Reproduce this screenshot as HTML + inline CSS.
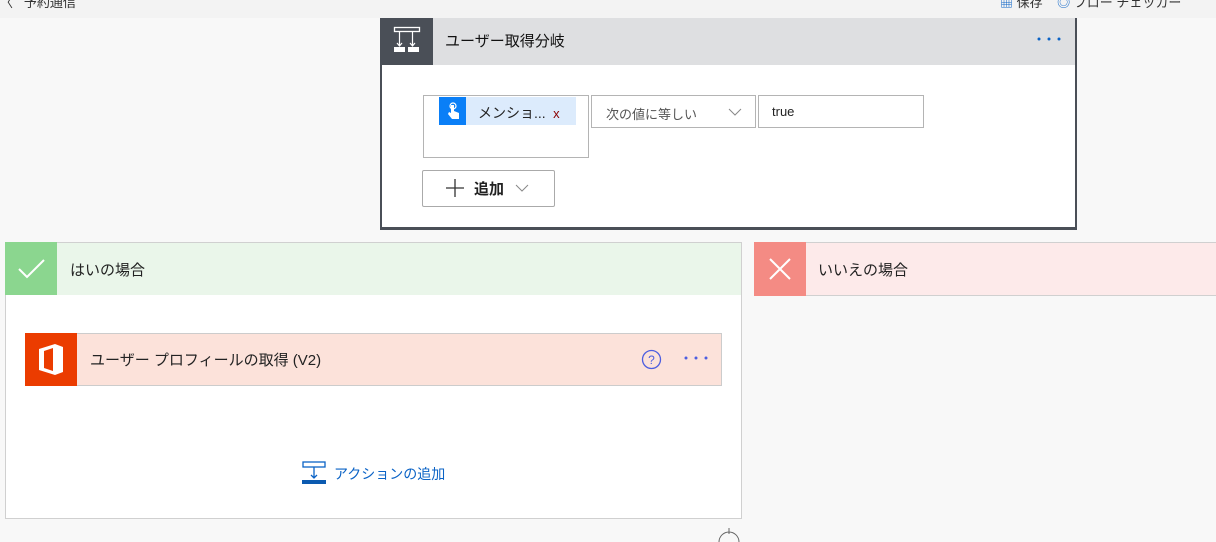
<!DOCTYPE html><html><head><meta charset="utf-8"><style>
body{margin:0;width:1216px;height:540px;background:#f8f8f8;font-family:"Liberation Sans","Noto Sans CJK JP",sans-serif;position:relative;overflow:hidden}
.a{position:absolute;box-sizing:border-box}
</style></head><body>
<div class="a" style="left:0;top:0;width:1216px;height:18px;background:#f3f3f3"></div>
<div class="a" style="left:0;top:-8px;font-size:13px;color:#333">〈 &nbsp; 予約通信</div>
<div class="a" style="left:1000px;top:-8px;font-size:13px;color:#333"><span style="color:#0b63c6">▦</span> 保存 &nbsp;&nbsp; <span style="color:#0b63c6">◎</span> フロー チェッカー</div>

<div class="a" style="left:380px;top:18px;width:697px;height:212px;background:#fff;border:2px solid #4a4f57;border-top:none;border-bottom-width:3px"></div>
<div class="a" style="left:380px;top:18px;width:697px;height:47px;background:#dedfe1;border-left:2px solid #4a4f57;border-right:2px solid #4a4f57"></div>
<div class="a" style="left:380px;top:18px;width:53px;height:47px;background:#4a4f57">
<svg width="53" height="47" viewBox="0 0 53 47"><rect x="14.5" y="9.5" width="25" height="4" fill="none" stroke="#fff" stroke-width="1.3"/><path d="M19.5 14v13M32.5 14v13M17 25l2.5 3 2.5-3M30 25l2.5 3 2.5-3" stroke="#fff" fill="none" stroke-width="1.2"/><rect x="14" y="29" width="11" height="5" fill="#fff"/><rect x="28" y="29" width="11" height="5" fill="#fff"/></svg></div>
<div class="a" style="left:445px;top:30px;font-size:15px;color:#111">ユーザー取得分岐</div>
<svg class="a" style="left:1036px;top:36px" width="26" height="6"><circle cx="3" cy="3" r="1.5" fill="#0b63c6"/><circle cx="13" cy="3" r="1.5" fill="#0b63c6"/><circle cx="23" cy="3" r="1.5" fill="#0b63c6"/></svg>

<div class="a" style="left:423px;top:95px;width:166px;height:63px;border:1px solid #b4b4b4;background:#fff"></div>
<div class="a" style="left:439px;top:97px;width:137px;height:28px;background:#dcebfc"></div>
<div class="a" style="left:439px;top:97px;width:27px;height:28px;background:#0a7ff7"><svg width="27" height="28"><circle cx="14" cy="9" r="3" fill="none" stroke="#fff" stroke-width="1.2"/><path d="M12 8v8l-2-1 -1 2 4 5h7v-6l-5-2v-6z" fill="#fff"/></svg></div>
<div class="a" style="left:478px;top:103px;font-size:14px;color:#222">メンショ... <span style="color:#8a0000;font-size:13px">&nbsp;x</span></div>
<div class="a" style="left:591px;top:95px;width:165px;height:33px;border:1px solid #b4b4b4;background:#fff"></div>
<div class="a" style="left:606px;top:104px;font-size:13px;color:#555">次の値に等しい</div>
<svg class="a" style="left:728px;top:107px" width="14" height="10"><path d="M1 2l6 6 6-6" stroke="#888" fill="none"/></svg>
<div class="a" style="left:758px;top:95px;width:166px;height:33px;border:1px solid #b4b4b4;background:#fff"></div>
<div class="a" style="left:772px;top:104px;font-size:13px;color:#222">true</div>
<div class="a" style="left:422px;top:170px;width:133px;height:37px;border:1px solid #aaa;border-radius:2px;background:#fff"></div>
<svg class="a" style="left:445px;top:178px" width="20" height="20"><path d="M10 1v18M1 10h18" stroke="#333" stroke-width="1.3"/></svg>
<div class="a" style="left:474px;top:178px;font-size:15px;font-weight:bold;color:#222">追加</div>
<svg class="a" style="left:515px;top:183px" width="14" height="10"><path d="M1 2l6 6 6-6" stroke="#888" fill="none"/></svg>

<div class="a" style="left:5px;top:242px;width:737px;height:277px;background:#fff;border:1px solid #d0d0d0"></div>
<div class="a" style="left:5px;top:242px;width:737px;height:53px;background:#eaf6ea;border:1px solid #d0d0d0;border-bottom:none"></div>
<div class="a" style="left:5px;top:242px;width:52px;height:53px;background:#8bd68f"><svg width="52" height="53"><path d="M14 27l8 8 17-17" stroke="#fff" stroke-width="2" fill="none"/></svg></div>
<div class="a" style="left:70px;top:259px;font-size:15px;color:#222">はいの場合</div>
<div class="a" style="left:754px;top:242px;width:470px;height:54px;background:#fdeaea;border:1px solid #d0d0d0"></div>
<div class="a" style="left:754px;top:242px;width:52px;height:54px;background:#f48b84"><svg width="52" height="54"><path d="M16 17l20 20M36 17l-20 20" stroke="#fff" stroke-width="2"/></svg></div>
<div class="a" style="left:818px;top:259px;font-size:15px;color:#222">いいえの場合</div>

<div class="a" style="left:25px;top:333px;width:697px;height:53px;background:#fce2da;border:1px solid #ccc"></div>
<div class="a" style="left:25px;top:333px;width:52px;height:53px;background:#eb3c00"><svg width="52" height="53"><path d="M14 16l16-5 8 3v25l-8 3-16-5zM19 18l9-3v23l-9-3z" fill="#fff" fill-rule="evenodd"/></svg></div>
<div class="a" style="left:90px;top:349px;font-size:15px;color:#222">ユーザー プロフィールの取得 (V2)</div>
<svg class="a" style="left:641px;top:349px" width="21" height="21"><circle cx="10.5" cy="10.5" r="9" stroke="#4d5ee0" fill="none" stroke-width="1.3"/><text x="10.5" y="15" font-size="12" text-anchor="middle" fill="#4d5ee0" font-family="Liberation Sans">?</text></svg>
<svg class="a" style="left:683px;top:355px" width="26" height="6"><circle cx="3" cy="3" r="1.5" fill="#4d5ee0"/><circle cx="13" cy="3" r="1.5" fill="#4d5ee0"/><circle cx="23" cy="3" r="1.5" fill="#4d5ee0"/></svg>

<svg class="a" style="left:302px;top:461px" width="24" height="24"><rect x="1" y="1" width="22" height="5" fill="none" stroke="#0b63c6" stroke-width="1.3"/><path d="M12 6v11M9 14l3 3 3-3" stroke="#0b63c6" fill="none" stroke-width="1.3"/><rect x="0" y="19" width="24" height="4" fill="#0b5ab0"/></svg>
<div class="a" style="left:334px;top:464px;font-size:14px;color:#0b63c6">アクションの追加</div>
<svg class="a" style="left:715px;top:528px" width="30" height="14"><path d="M14 0v6M4 14a10 10 0 0 1 20 0" stroke="#666" fill="none"/></svg>
</body></html>
